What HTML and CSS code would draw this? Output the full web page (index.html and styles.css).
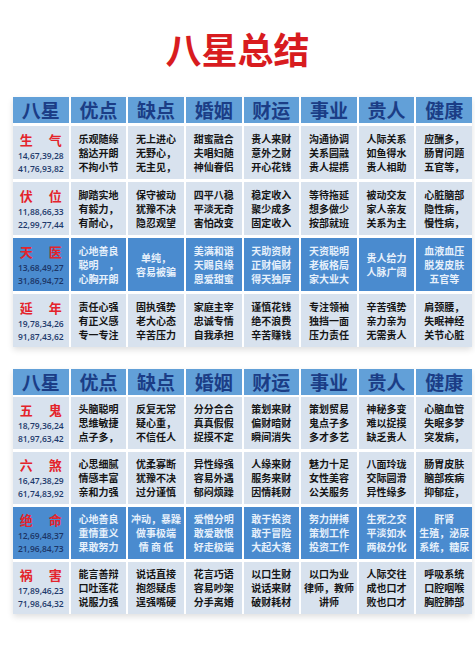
FILE: index.html
```html
<!DOCTYPE html>
<html lang="zh-CN">
<head>
<meta charset="utf-8">
<title>八星总结</title>
<link rel="stylesheet" href="styles.css">
</head>
<body>
<div class="page">
  <h1 class="title">八星总结</h1>

  <div class="table t1">
    <div class="row head">
      <div class="cell">八星</div><div class="cell">优点</div><div class="cell">缺点</div><div class="cell">婚姻</div><div class="cell">财运</div><div class="cell">事业</div><div class="cell">贵人</div><div class="cell">健康</div>
    </div>
    <div class="row">
      <div class="cell star"><div class="name"><span>生</span><span>气</span></div><div class="num">14,67,39,28</div><div class="num">41,76,93,82</div></div>
      <div class="cell">乐观随缘<br>豁达开朗<br>不拘小节</div>
      <div class="cell">无上进心<br>无野心，<br>无主见，</div>
      <div class="cell">甜蜜融合<br>夫唱妇随<br>神仙眷侣</div>
      <div class="cell">贵人来财<br>意外之财<br>开心花钱</div>
      <div class="cell">沟通协调<br>关系圆融<br>贵人提携</div>
      <div class="cell">人际关系<br>如鱼得水<br>贵人相助</div>
      <div class="cell">应酬多，<br>肠胃问题<br>五官等，</div>
    </div>
    <div class="row">
      <div class="cell star"><div class="name"><span>伏</span><span>位</span></div><div class="num">11,88,66,33</div><div class="num">22,99,77,44</div></div>
      <div class="cell">脚踏实地<br>有毅力，<br>有耐心，</div>
      <div class="cell">保守被动<br>犹豫不决<br>隐忍观望</div>
      <div class="cell">四平八稳<br>平淡无奇<br>害怕改变</div>
      <div class="cell">稳定收入<br>聚少成多<br>固定收入</div>
      <div class="cell">等待拖延<br>想多做少<br>按部就班</div>
      <div class="cell">被动交友<br>家人亲友<br>关系为主</div>
      <div class="cell">心脏脑部<br>隐性病，<br>慢性病，</div>
    </div>
    <div class="row hl">
      <div class="cell star"><div class="name"><span>天</span><span>医</span></div><div class="num">13,68,49,27</div><div class="num">31,86,94,72</div></div>
      <div class="cell">心地善良<br>聪明　，<br>心胸开朗</div>
      <div class="cell">单纯，<br>容易被骗</div>
      <div class="cell">美满和谐<br>天赐良缘<br>恩爱甜蜜</div>
      <div class="cell">天助资财<br>正财偏财<br>得天独厚</div>
      <div class="cell">天资聪明<br>老板格局<br>家大业大</div>
      <div class="cell">贵人给力<br>人脉广阔</div>
      <div class="cell">血液血压<br>脱发皮肤<br>五官等</div>
    </div>
    <div class="row">
      <div class="cell star"><div class="name"><span>延</span><span>年</span></div><div class="num">19,78,34,26</div><div class="num">91,87,43,62</div></div>
      <div class="cell">责任心强<br>有正义感<br>专一专注</div>
      <div class="cell">固执强势<br>老大心态<br>辛苦压力</div>
      <div class="cell">家庭主宰<br>忠诚专情<br>自我承担</div>
      <div class="cell">谨慎花钱<br>绝不浪费<br>辛苦赚钱</div>
      <div class="cell">专注领袖<br>独挡一面<br>压力责任</div>
      <div class="cell">辛苦强势<br>亲力亲为<br>无需贵人</div>
      <div class="cell">肩颈腰，<br>失眠神经<br>关节心脏</div>
    </div>
  </div>

  <div class="table t2">
    <div class="row head">
      <div class="cell">八星</div><div class="cell">优点</div><div class="cell">缺点</div><div class="cell">婚姻</div><div class="cell">财运</div><div class="cell">事业</div><div class="cell">贵人</div><div class="cell">健康</div>
    </div>
    <div class="row">
      <div class="cell star"><div class="name"><span>五</span><span>鬼</span></div><div class="num">18,79,36,24</div><div class="num">81,97,63,42</div></div>
      <div class="cell">头脑聪明<br>思维敏捷<br>点子多，</div>
      <div class="cell">反复无常<br>疑心重，<br>不信任人</div>
      <div class="cell">分分合合<br>真真假假<br>捉摸不定</div>
      <div class="cell">策划来财<br>偏财暗财<br>瞬间消失</div>
      <div class="cell">策划贸易<br>鬼点子多<br>多才多艺</div>
      <div class="cell">神秘多变<br>难以捉摸<br>缺乏贵人</div>
      <div class="cell">心脑血管<br>失眠多梦<br>突发病，</div>
    </div>
    <div class="row">
      <div class="cell star"><div class="name"><span>六</span><span>煞</span></div><div class="num">16,47,38,29</div><div class="num">61,74,83,92</div></div>
      <div class="cell">心思细腻<br>情感丰富<br>亲和力强</div>
      <div class="cell">优柔寡断<br>犹豫不决<br>过分谨慎</div>
      <div class="cell">异性缘强<br>容易外遇<br>郁闷烦躁</div>
      <div class="cell">人缘来财<br>服务来财<br>因情耗财</div>
      <div class="cell">魅力十足<br>女性美容<br>公关服务</div>
      <div class="cell">八面玲珑<br>交际圆滑<br>异性缘多</div>
      <div class="cell">肠胃皮肤<br>脑部疾病<br>抑郁症，</div>
    </div>
    <div class="row hl">
      <div class="cell star"><div class="name"><span>绝</span><span>命</span></div><div class="num">12,69,48,37</div><div class="num">21,96,84,73</div></div>
      <div class="cell">心地善良<br>重情重义<br>果敢努力</div>
      <div class="cell">冲动，暴躁<br>做事极端<br>情 商 低</div>
      <div class="cell">爱憎分明<br>敢爱敢恨<br>好走极端</div>
      <div class="cell">敢于投资<br>敢于冒险<br>大起大落</div>
      <div class="cell">努力拼搏<br>策划工作<br>投资工作</div>
      <div class="cell">生死之交<br>平淡如水<br>两极分化</div>
      <div class="cell">肝肾<br>生殖，泌尿<br>系统，糖尿</div>
    </div>
    <div class="row">
      <div class="cell star"><div class="name"><span>祸</span><span>害</span></div><div class="num">17,89,46,23</div><div class="num">71,98,64,32</div></div>
      <div class="cell">能言善辩<br>口吐莲花<br>说服力强</div>
      <div class="cell">说话直接<br>抱怨疑虑<br>逞强嘴硬</div>
      <div class="cell">花言巧语<br>容易吵架<br>分手离婚</div>
      <div class="cell">以口生财<br>说话来财<br>破财耗材</div>
      <div class="cell">以口为业<br>律师，教师<br>讲师</div>
      <div class="cell">人际交往<br>成也口才<br>败也口才</div>
      <div class="cell">呼吸系统<br>口腔咽喉<br>胸腔肺部</div>
    </div>
  </div>
</div>
</body>
</html>
```
FILE: styles.css
```css
html, body {
  margin: 0;
  padding: 0;
  background: #ffffff;
}

body {
  width: 475px;
  height: 672px;
  overflow: hidden;
  font-family: "Noto Sans CJK SC", "Noto Sans", sans-serif;
}

.page {
  padding-top: 28px;
}

.title {
  margin: 0;
  text-align: center;
  font-size: 36px;
  line-height: 40px;
  font-weight: 700;
  color: #d81c1f;
}

.table {
  margin-left: 13px;
  width: 459px;
  display: flex;
  flex-direction: column;
  gap: 3px;
  background: #ffffff;
  box-shadow: 0 3px 6px rgba(0, 0, 0, 0.12);
}

.t1 {
  margin-top: 29px;
}

.t2 {
  margin-top: 22px;
}

.row {
  display: grid;
  grid-template-columns: repeat(8, 1fr);
  column-gap: 2px;
}

.t1 .row {
  height: 53px;
}

.t2 .row {
  height: 52px;
}

.t1 .row.head {
  height: 26px;
}

.t2 .row.head {
  height: 25px;
}

.cell {
  background: #d8e2ee;
  color: #151515;
  font-size: 10px;
  line-height: 14px;
  font-weight: 700;
  text-align: center;
  display: flex;
  flex-direction: column;
  justify-content: center;
  align-items: center;
  white-space: nowrap;
}

.head .cell {
  background: #62a0d8;
  color: #1b3d86;
  font-size: 19px;
  line-height: 26px;
  font-weight: 700;
}

.hl .cell {
  background: #4a8bcf;
  color: #e6f0fb;
}

.star .name {
  display: flex;
  gap: 16px;
  color: #e4232b;
  font-size: 13px;
  line-height: 18px;
  font-weight: 700;
}

.star .num {
  font-family: "Open Sans", "Liberation Sans", sans-serif;
  font-size: 8.5px;
  line-height: 13px;
  font-weight: 600;
  color: #1e3a6c;
}

.hl .star .num {
  color: #1c3566;
}
```
